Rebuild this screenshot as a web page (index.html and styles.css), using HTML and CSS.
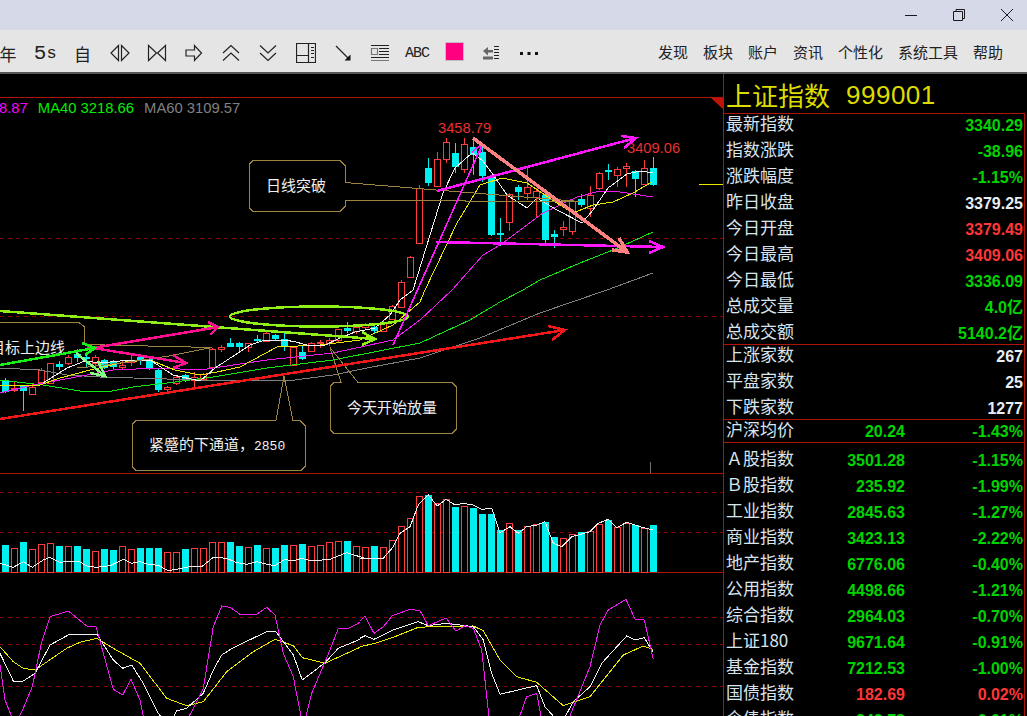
FILE: index.html
```html
<!DOCTYPE html>
<html lang="zh-CN">
  <head>
    <meta charset="UTF-8" />
    <title>上证指数 999001</title>
    <link rel="stylesheet" href="styles.css">
  </head>
  <body>
    <header class="titlebar">
      <svg class="win-btn" width="14" height="14" viewBox="0 0 14 14"><path d="M1 7.500h12" /></svg>
      <svg class="win-btn" width="14" height="14" viewBox="0 0 14 14"><path d="M1.500 3.500h9v9h-9zM4 3.500v-2h8.500v9h-2" /></svg>
      <svg class="win-btn" width="14" height="14" viewBox="0 0 14 14"><path d="M1 1l12 12M13 1l-12 12" /></svg>
    </header>

    <nav class="toolbar">
      <div class="tools">
        <span class="tool tool-text tool-cjk">年</span>
        <span class="tool tool-text tool-5s"><b>5</b>s</span>
        <span class="tool tool-text tool-cjk">自</span>
        <span class="tool"><svg width="20" height="20" viewBox="0 0 20 20"><path d="M8.500 2.500l-7.500 7.500 7.500 7.500zM11.500 2.500l7.500 7.500-7.500 7.500z" /></svg></span>
        <span class="tool"><svg width="20" height="20" viewBox="0 0 20 20"><path d="M1.500 2.500l8 7.500-8 7.500zM18.500 2.500l-8 7.500 8 7.500z" /></svg></span>
        <span class="tool"><svg width="20" height="20" viewBox="0 0 20 20"><path d="M2 7h8.500v-4.500l7 7.500-7 7.500v-4.500h-8.500z" /></svg></span>
        <span class="tool"><svg width="20" height="20" viewBox="0 0 20 20"><path d="M2 10l8-7.500 8 7.500M2 17.500l8-7.500 8 7.500" /></svg></span>
        <span class="tool"><svg width="20" height="20" viewBox="0 0 20 20"><path d="M2 2.500l8 7.500 8-7.500M2 10l8 7.500 8-7.500" /></svg></span>
        <span class="tool"><svg width="20" height="20" viewBox="0 0 20 20"><path d="M.5.5h19v19h-19zM.5 12.500h12M12.500 .5v19" /><path d="M15 4.500h3M15 7.500h3M15 10.500h3M15 14.500h3" /></svg></span>
        <span class="tool"><svg width="20" height="20" viewBox="0 0 20 20"><path d="M3 3l13 13" /><path class="solid" d="M17.500 17.500h-6l6-6z" /></svg></span>
        <span class="tool"><svg width="20" height="20" viewBox="0 0 20 20"><path d="M1 2.500h18M9 5.500h10M9 8.500h10M9 11.500h10M1 14.500h18" /><path class="pale" d="M1.500 5.500h6v6h-6zM1 17.500h18" /></svg></span>
        <span class="tool tool-text tool-abc">ABC</span>
        <span class="tool"><span class="swatch"></span></span>
        <span class="tool"><svg width="20" height="20" viewBox="0 0 20 20"><path class="pale-solid" d="M2 8l5-4v3h5v2.500h-5v3zM2 13.500h10v3h-10z" /><path d="M13 3.500h5M13 6.500h5M13 9.500h5M13 12.500h5M13 15.500h5" /></svg></span>
        <span class="tool"><svg width="20" height="20" viewBox="0 0 20 20"><path class="solid" d="M1 9h3v3h-3zM8.500 9h3v3h-3zM16 9h3v3h-3z" /></svg></span>
      </div>
      <div class="menus">
        <a>发现</a>
        <a>板块</a>
        <a>账户</a>
        <a>资讯</a>
        <a>个性化</a>
        <a>系统工具</a>
        <a>帮助</a>
      </div>
    </nav>

    <main class="terminal">
      <section class="chart">
        <div class="legend">
          <span class="ma20">8.87</span>
          <span class="ma40">MA40 3218.66</span>
          <span class="ma60">MA60 3109.57</span>
        </div>
        <svg id="plot" class="plot" width="723" height="642" viewBox="0 74 723 642">
          <!-- grid -->
          <path class="frame" d="M0 97.500h723M0 473.500h723M0 572.500h723" />
          <path class="frame-fill" d="M711 98h12v11z" />
          <path class="dash" d="M0 238.500h723M0 316.500h723M0 492.500h723M0 532.500h723M0 617.500h723M0 644.500h723M0 686.500h723" />
          <path class="tick" d="M650.500 462v11" />
          <path class="ma-yellow" d="M699 184.500h24" />

          <!-- candles and indicator lines from chart.js -->
          <g id="series"></g>

          <!-- hand drawn callouts -->
          <path class="callout" d="M253 160.500h87l5 5v17l85 7 150 12-235-1v6l-5 5h-87l-4-4v-43z" />
          <path class="callout" d="M0 322.500h79l5 4v18l128 3-40 8-40 6-48 6h-7" />
          <path class="callout" d="M136 420.500h140l8-44 9 44h7l5 5v41l-4 4h-165l-4-4v-42z" />
          <path class="callout" d="M334 382.500h7l-11-35 28 35h94l4 4v43l-4 4h-118l-4-4v-43z" />
          <text class="note" x="266" y="191">日线突破</text>
          <text class="note" x="-10" y="353">目标上边线</text>
          <text class="note" x="149" y="450">紧蹙的下通道，<tspan class="note-num">2850</tspan></text>
          <text class="note" x="347" y="413">今天开始放量</text>

          <text class="peak" x="438" y="133">3458.79</text>
          <text class="peak" x="627" y="153">3409.06</text>

          <!-- trend lines -->
          <path class="trend lime" d="M0 311l375 28M362 332l13 7-13 6" />
          <ellipse class="trend lime" cx="319" cy="316.500" rx="89" ry="10" />
          <path class="trend red" d="M0 419l565-89M548 326l17 4-13 10" />
          <path class="trend pink" d="M87 349l131-22M208 322l10 5-8 8" />
          <path class="trend pink" d="M87 347l99 16M173 355l13 8-13 5" />
          <path class="trend green" d="M0 365l95-17M82 343l13 5-10 7" />
          <path class="trend pale-green" d="M76 353l29 23M90 373l15 3-7-15" />
          <path class="trend magenta" d="M437 191l199-53M621 136l15 2-12 10" />
          <path class="trend magenta" d="M436 242l227 5M649 241l14 6-14 6" />
          <path class="trend magenta thin" d="M393 345l89-200M472 152l10-8-2 9" />
          <path class="trend salmon" d="M473 138l154 114M619 238l8 14-15-2" />
        </svg>
      </section>

      <aside class="quote">
        <h2 class="quote-title"><span>上证指数</span><span>999001</span></h2>

        <div class="block">
          <div class="row"><span>最新指数</span><b class="down">3340.29</b></div>
          <div class="row"><span>指数涨跌</span><b class="down">-38.96</b></div>
          <div class="row"><span>涨跌幅度</span><b class="down">-1.15%</b></div>
          <div class="row"><span>昨日收盘</span><b class="flat">3379.25</b></div>
          <div class="row"><span>今日开盘</span><b class="up">3379.49</b></div>
          <div class="row"><span>今日最高</span><b class="up">3409.06</b></div>
          <div class="row"><span>今日最低</span><b class="down">3336.09</b></div>
          <div class="row"><span>总成交量</span><b class="down">4.0亿</b></div>
          <div class="row"><span>总成交额</span><b class="down">5140.2亿</b></div>
        </div>

        <div class="block">
          <div class="row"><span>上涨家数</span><b class="flat">267</b></div>
          <div class="row"><span>平盘家数</span><b class="flat">25</b></div>
          <div class="row"><span>下跌家数</span><b class="flat">1277</b></div>
        </div>

        <div class="block">
          <div class="row row-3"><span>沪深均价</span><b class="down">20.24</b><b class="down">-1.43%</b></div>
        </div>

        <div class="block block-last">
          <div class="row row-3"><span>Ａ股指数</span><b class="down">3501.28</b><b class="down">-1.15%</b></div>
          <div class="row row-3"><span>Ｂ股指数</span><b class="down">235.92</b><b class="down">-1.99%</b></div>
          <div class="row row-3"><span>工业指数</span><b class="down">2845.63</b><b class="down">-1.27%</b></div>
          <div class="row row-3"><span>商业指数</span><b class="down">3423.13</b><b class="down">-2.22%</b></div>
          <div class="row row-3"><span>地产指数</span><b class="down">6776.06</b><b class="down">-0.40%</b></div>
          <div class="row row-3"><span>公用指数</span><b class="down">4498.66</b><b class="down">-1.21%</b></div>
          <div class="row row-3"><span>综合指数</span><b class="down">2964.03</b><b class="down">-0.70%</b></div>
          <div class="row row-3"><span>上证180</span><b class="down">9671.64</b><b class="down">-0.91%</b></div>
          <div class="row row-3"><span>基金指数</span><b class="down">7212.53</b><b class="down">-1.00%</b></div>
          <div class="row row-3"><span>国债指数</span><b class="up">182.69</b><b class="up">0.02%</b></div>
          <div class="row row-3"><span>企债指数</span><b class="down">243.78</b><b class="down">-0.01%</b></div>
        </div>
      </aside>
    </main>

    <script src="chart.js"></script>
  </body>
</html>
```

FILE: styles.css
```css
html,
body {
  margin: 0;
  padding: 0;
  height: 716px;
  overflow: hidden;
  background-color: #000;
}

body {
  font-family: "Liberation Sans", "Noto Sans CJK SC", sans-serif;
}

.titlebar {
  display: flex;
  justify-content: flex-end;
  align-items: center;
  gap: 34px;
  height: 30px;
  padding-right: 13px;
  box-sizing: border-box;
  background-color: #d6dae8;
}

.win-btn path {
  fill: none;
  stroke: #1a1a1a;
  stroke-width: 1;
}

.toolbar {
  display: flex;
  justify-content: space-between;
  align-items: center;
  height: 44px;
  box-sizing: border-box;
  background-color: #e5e5e5;
  border-bottom: 2px solid #555;
}

.tools {
  display: flex;
  margin-left: -10.600px;
  padding-top: 4px;
}

.tool {
  display: flex;
  justify-content: center;
  align-items: center;
  width: 37.200px;
  height: 24px;
  color: #222;
}

.tool svg path {
  fill: none;
  stroke: #222;
  stroke-width: 1.200;
}

.tool svg path.solid {
  fill: #111;
  stroke: none;
}

.tool svg path.pale {
  stroke: #777;
}

.tool svg path.pale-solid {
  fill: #666;
  stroke: none;
}

.tool-text {
  font-size: 17px;
}

.tool-cjk {
  font-family: "Noto Sans CJK SC", sans-serif;
  font-weight: 400;
}

.tool-5s {
  font-family: "Liberation Mono", monospace;
  font-size: 17px;
}

.tool-5s b {
  font-size: 21px;
  font-weight: 400;
}

.tool-abc {
  font-family: "Liberation Mono", monospace;
  font-size: 15px;
  letter-spacing: -1px;
}

.swatch {
  width: 19px;
  height: 19px;
  margin-bottom: 3px;
  background-color: #ff0080;
  border: 1px solid #c0c0c0;
  box-sizing: border-box;
}

.menus {
  display: flex;
  gap: 15px;
  padding-right: 24px;
  font-family: "Noto Sans CJK SC", sans-serif;
  font-size: 15px;
  color: #222;
}

.terminal {
  display: flex;
  height: 642px;
  overflow: hidden;
}

.chart {
  position: relative;
  flex: 0 0 723px;
  height: 642px;
}

.plot {
  display: block;
}

.legend {
  position: absolute;
  top: 26px;
  left: -1px;
  display: flex;
  gap: 10px;
  font-size: 14.800px;
  line-height: 16px;
}

.ma20 {
  color: #ff00ff;
}

.ma40 {
  color: #00f000;
}

.ma60 {
  color: #808080;
}

/* chart svg */
.frame {
  fill: none;
  stroke: #b01408;
  shape-rendering: crispEdges;
}

.frame-fill {
  fill: #c01408;
}

.dash {
  fill: none;
  stroke: #8c0000;
  stroke-dasharray: 4 4;
  shape-rendering: crispEdges;
}

.tick {
  fill: none;
  stroke: #707070;
  shape-rendering: crispEdges;
}

.callout {
  fill: none;
  stroke: #9c8440;
  shape-rendering: crispEdges;
}

.note {
  font-family: "Noto Sans CJK SC", sans-serif;
  font-size: 15px;
  fill: #f0f0f0;
}

.note-num {
  font-family: "Liberation Mono", monospace;
  font-size: 13px;
}

.peak {
  font-family: "Liberation Sans", sans-serif;
  font-size: 14.700px;
  fill: #e83030;
}

.trend {
  fill: none;
  stroke-width: 2.500;
  stroke-linejoin: miter;
  shape-rendering: crispEdges;
}

.lime {
  stroke: #90f018;
}

.red {
  stroke: #f01818;
}

.pink {
  stroke: #ff1090;
}

.green {
  stroke: #18f018;
}

.pale-green {
  stroke: #80ff80;
}

.magenta {
  stroke: #ff18ff;
}

.thin {
  stroke-width: 1.600;
}

.salmon {
  stroke: #ff8080;
  stroke-width: 3.500;
}

.ma-white,
.ma-yellow,
.ma-magenta,
.ma-green,
.ma-gray {
  fill: none;
  stroke-width: 1;
  shape-rendering: crispEdges;
}

.ma-white {
  stroke: #f0f0f0;
}

.ma-yellow {
  stroke: #e8e800;
}

.ma-magenta {
  stroke: #f018f0;
}

.ma-green {
  stroke: #10e810;
}

.ma-gray {
  stroke: #808080;
}

.wick-red,
.wick-cyan {
  fill: none;
  shape-rendering: crispEdges;
}

.wick-red,
.bar-red {
  stroke: #ff3c3c;
}

.wick-cyan {
  stroke: #00f0f0;
}

.bar-red {
  fill: #000;
  shape-rendering: crispEdges;
}

.bar-cyan {
  fill: #00f0f0;
  shape-rendering: crispEdges;
}

/* right hand quote panel */
.quote {
  flex: 1;
  height: 642px;
  overflow: hidden;
  border-left: 1px solid #b01408;
  box-sizing: border-box;
  padding-right: 2px;
  font-family: "Noto Sans CJK SC", sans-serif;
}

.quote-title {
  display: flex;
  gap: 16px;
  align-items: center;
  height: 39px;
  margin: 0;
  padding-left: 2px;
  padding-top: 3px;
  box-sizing: border-box;
  font-size: 26px;
  line-height: 36px;
  font-weight: 400;
  color: #dcdc00;
}

.quote-title span:last-child {
  font-family: "Liberation Sans", sans-serif;
  letter-spacing: 0.500px;
}

.block {
  display: flex;
  flex-direction: column;
  gap: 4px;
  padding-bottom: 2px;
  border-top: 1px solid #b01408;
  border-right: 1px solid #b01408;
}

.block .row:first-child {
  margin-top: -2px;
}

.block-last {
  padding-top: 6px;
}

.row {
  display: grid;
  grid-template-columns: 80px 1fr;
  height: 22px;
  padding: 0 1px 0 2px;
  align-items: center;
  font-size: 17px;
  line-height: 22px;
  color: #d8e4ee;
}

.row-3 {
  grid-template-columns: 80px 99px 1fr;
}

.row span {
  padding-bottom: 5px;
}

.row b {
  justify-self: end;
  font-family: "Liberation Sans", "Noto Sans CJK SC", sans-serif;
  font-size: 16px;
  font-weight: 700;
}

.down {
  color: #00d400;
}

.up {
  color: #ff3636;
}

.flat {
  color: #e8eef4;
}
```

FILE: chart.js
```js
const NS = "http://www.w3.org/2000/svg";
const series = document.getElementById("series");

function add(tag, attrs) {
  const el = document.createElementNS(NS, tag);
  Object.keys(attrs).forEach((key) => el.setAttribute(key, attrs[key]));
  series.appendChild(el);
}

// slot, colour, wick top, body top, body bottom, wick bottom
const candles = [
  [0, "c", 378, 380, 392, 393], [1, "r", 382, 388, 390, 392], [2, "c", 385, 386, 391, 411],
  [3, "r", 383, 387, 394, 395], [4, "r", 368, 370, 382, 384], [5, "r", 363, 363, 383, 384],
  [6, "c", 361, 364, 367, 370], [7, "r", 355, 357, 363, 365], [8, "c", 349, 354, 358, 362],
  [9, "c", 355, 357, 359, 367], [10, "r", 355, 357, 363, 366], [11, "c", 359, 360, 368, 369],
  [12, "c", 360, 362, 367, 369], [13, "r", 360, 365, 367, 370], [14, "r", 355, 360, 362, 366],
  [15, "c", 355, 357, 361, 365], [16, "c", 358, 359, 368, 370], [17, "c", 368, 370, 390, 392],
  [18, "r", 386, 387, 389, 392], [19, "r", 376, 377, 383, 385], [20, "c", 374, 375, 381, 382],
  [21, "r", 372, 377, 380, 387], [22, "r", 373, 374, 379, 380], [23, "r", 348, 349, 367, 368],
  [24, "r", 345, 347, 349, 352], [25, "c", 338, 343, 347, 347], [26, "c", 342, 343, 347, 352],
  [27, "r", 343, 343, 347, 352], [28, "c", 335, 339, 341, 342], [29, "r", 332, 333, 341, 342],
  [30, "c", 334, 335, 339, 340], [31, "c", 333, 339, 347, 351], [32, "r", 346, 347, 365, 366],
  [33, "c", 345, 352, 359, 360], [34, "r", 342, 343, 351, 352], [35, "r", 340, 342, 343, 348],
  [36, "r", 338, 340, 343, 346], [37, "r", 329, 329, 340, 342], [38, "c", 322, 328, 331, 333],
  [39, "r", 325, 327, 331, 334], [40, "r", 323, 325, 327, 330], [41, "c", 324, 327, 331, 333],
  [42, "r", 320, 323, 331, 332], [43, "r", 305, 306, 319, 320], [44, "r", 280, 282, 307, 308],
  [45, "r", 256, 257, 277, 278], [46, "r", 185, 188, 243, 244], [47, "c", 158, 168, 183, 186],
  [48, "r", 152, 159, 186, 187], [49, "r", 138, 142, 159, 163], [50, "c", 143, 153, 167, 173],
  [51, "r", 138, 144, 169, 173], [52, "c", 140, 147, 155, 175], [53, "c", 143, 152, 176, 182],
  [54, "c", 176, 177, 235, 236], [55, "c", 218, 233, 235, 246], [56, "r", 193, 194, 222, 231],
  [57, "c", 185, 187, 192, 200], [58, "r", 168, 187, 193, 200], [59, "r", 188, 191, 197, 217],
  [60, "c", 194, 195, 240, 243], [61, "c", 230, 234, 237, 248], [62, "r", 221, 227, 229, 236],
  [63, "r", 200, 201, 231, 235], [64, "c", 194, 199, 205, 207], [65, "r", 186, 195, 208, 217],
  [66, "r", 172, 173, 188, 190], [67, "c", 164, 170, 172, 180], [68, "r", 167, 169, 175, 187],
  [69, "r", 163, 166, 168, 187], [70, "c", 170, 171, 179, 197], [71, "r", 160, 168, 184, 185],
  [72, "c", 157, 168, 185, 186],
];

// volume bars: colour and top, in the same slots as the candles
const volumes = [
  ["c", 545], ["r", 548], ["c", 542], ["r", 549], ["r", 544], ["r", 543], ["c", 546], ["r", 546],
  ["c", 546], ["c", 549], ["r", 551], ["c", 549], ["c", 550], ["r", 546], ["r", 549], ["c", 548],
  ["c", 548], ["c", 548], ["r", 552], ["r", 552], ["c", 549], ["r", 548], ["r", 548], ["r", 542],
  ["r", 542], ["c", 542], ["c", 546], ["r", 547], ["c", 545], ["r", 548], ["c", 548], ["c", 545],
  ["r", 545], ["c", 544], ["r", 546], ["r", 545], ["r", 542], ["r", 541], ["c", 541], ["r", 546],
  ["r", 547], ["c", 546], ["r", 547], ["r", 540], ["r", 526], ["r", 518], ["r", 496], ["c", 495],
  ["r", 503], ["r", 499], ["c", 507], ["r", 506], ["c", 508], ["c", 514], ["c", 514], ["c", 530],
  ["r", 523], ["c", 530], ["r", 526], ["r", 524], ["c", 522], ["c", 537], ["r", 538], ["r", 534],
  ["c", 532], ["r", 531], ["r", 524], ["c", 520], ["r", 527], ["r", 523], ["c", 525], ["r", 528],
  ["c", 525],
];

candles.forEach(([slot, colour, wickTop, top, bottom, wickBottom]) => {
  const x = 2 + slot * 9;
  const wick = "M" + (x + 3.5) + " " + wickTop + "V" + wickBottom;
  add("path", { d: wick, class: colour === "r" ? "wick-red" : "wick-cyan" });
  if (colour === "r") {
    add("rect", { x: x + 0.5, y: top + 0.5, width: 6, height: bottom - top, class: "bar-red" });
  } else {
    add("rect", { x: x, y: top, width: 7, height: Math.max(bottom - top, 1), class: "bar-cyan" });
  }
});

volumes.forEach(([colour, top], slot) => {
  const x = 2 + slot * 9;
  if (colour === "r") {
    add("rect", { x: x + 0.5, y: top + 0.5, width: 6, height: 572 - top, class: "bar-red" });
  } else {
    add("rect", { x: x, y: top, width: 7, height: 572 - top, class: "bar-cyan" });
  }
});

function line(cls, pts) {
  add("polyline", { points: pts.map((p) => p.join(",")).join(" "), class: cls });
}

// the lower indicator lines were read at 3x, so they are scaled down here
function line3(cls, ox, oy, pts) {
  line(cls, pts.map(([x, y]) => [(ox + x / 3).toFixed(1), (oy + y / 3).toFixed(1)]));
}

// moving averages
line("ma-gray", [[0, 368], [40, 370], [67, 375], [100, 377], [200, 380], [287, 381], [333, 375], [367, 368], [420, 358], [480, 338], [540, 313], [607, 290], [653, 273]]);
line("ma-green", [[0, 380], [43, 385], [80, 391], [107, 392], [133, 387], [167, 383], [213, 377], [267, 368], [333, 360], [420, 343], [470, 320], [500, 302], [523, 290], [540, 280], [580, 263], [613, 250], [653, 232]]);
line("ma-magenta", [[0, 393], [33, 385], [87, 375], [113, 370], [160, 368], [200, 370], [267, 360], [333, 353], [393, 340], [420, 320], [452, 290], [483, 255], [500, 245], [543, 213], [577, 197], [600, 191], [620, 192], [653, 197]]);
line("ma-yellow", [[0, 385], [40, 385], [60, 378], [90, 370], [125, 362], [150, 360], [175, 370], [200, 375], [217, 372], [240, 367], [277, 347], [320, 345], [360, 340], [393, 325], [420, 302], [425, 290], [457, 223], [480, 185], [502, 178], [527, 183], [557, 203], [573, 213], [593, 205], [613, 202], [633, 193], [652, 182]]);
line("ma-white", [[43, 383], [67, 368], [85, 361], [100, 363], [130, 360], [150, 360], [173, 375], [200, 381], [215, 368], [235, 355], [250, 345], [265, 340], [285, 340], [296, 342], [310, 346], [325, 345], [340, 338], [355, 332], [375, 328], [390, 315], [400, 300], [413, 290], [443, 193], [455, 168], [472, 153], [482, 160], [492, 173], [507, 195], [527, 208], [537, 198], [557, 210], [582, 223], [593, 210], [608, 188], [627, 174], [640, 171], [653, 173]]);

// volume average
line3("ma-white", 0, 480, [[0, 250], [40, 262], [70, 245], [97, 262], [130, 240], [150, 232], [180, 248], [205, 243], [235, 243], [260, 258], [290, 262], [330, 257], [370, 238], [395, 250], [420, 245], [445, 253], [475, 256], [505, 272], [545, 265], [580, 258], [605, 260], [640, 232], [680, 235], [710, 248], [740, 253], [770, 245], [800, 253], [825, 257], [855, 238], [880, 243], [905, 235], [935, 243], [990, 238], [1040, 218], [1095, 235]]);
line3("ma-white", 360, 480, [[0, 235], [70, 235], [100, 200], [120, 160], [150, 140], [175, 75], [205, 45], [232, 78], [258, 58], [285, 75], [310, 70], [340, 75], [365, 88], [395, 85], [420, 158], [450, 140], [475, 160], [500, 140], [530, 135], [555, 125], [580, 190], [605, 200], [635, 170], [690, 155], [715, 130], [745, 118], [770, 143], [800, 127], [840, 140], [878, 150]]);

// KDJ
line3("ma-yellow", 0, 480, [[0, 500], [40, 545], [70, 565], [105, 570], [200, 505], [240, 487], [290, 475], [340, 505], [420, 550], [500, 655], [560, 677], [610, 665], [680, 575], [760, 515], [825, 478], [880, 497], [907, 533], [975, 550], [1080, 502]]);
line3("ma-yellow", 360, 480, [[0, 500], [45, 490], [100, 472], [175, 442], [215, 440], [340, 438], [370, 452], [420, 540], [470, 590], [530, 607], [610, 677], [690, 650], [790, 525], [850, 498], [878, 508]]);
line3("ma-white", 0, 480, [[0, 520], [40, 603], [70, 603], [105, 580], [150, 495], [205, 465], [235, 462], [290, 462], [340, 540], [368, 565], [395, 555], [430, 610], [475, 700], [490, 720], [515, 720], [530, 692], [560, 685], [610, 640], [640, 570], [665, 525], [700, 503], [800, 455], [828, 455], [880, 525], [907, 600], [975, 548], [1015, 505], [1080, 478]]);
line3("ma-white", 360, 480, [[0, 475], [15, 467], [42, 478], [100, 450], [175, 425], [205, 437], [258, 430], [340, 440], [370, 480], [395, 580], [420, 643], [495, 625], [530, 617], [555, 680], [590, 720], [610, 720], [640, 665], [690, 620], [725, 550], [800, 468], [825, 480], [853, 473], [878, 515]]);
line3("ma-magenta", 0, 480, [[0, 555], [15, 660], [37, 715], [55, 715], [70, 685], [97, 620], [125, 485], [150, 410], [205, 393], [260, 438], [288, 440], [340, 628], [368, 645], [393, 598], [420, 660], [432, 720], [562, 720], [610, 625], [640, 440], [665, 378], [690, 382], [720, 403], [770, 403], [800, 382], [825, 405], [850, 520], [880, 590], [905, 720], [915, 720], [935, 640], [990, 510], [1015, 445], [1045, 445], [1080, 427]]);
line3("ma-magenta", 360, 480, [[0, 422], [15, 408], [42, 460], [70, 440], [97, 407], [150, 388], [180, 392], [205, 437], [258, 414], [288, 453], [315, 437], [340, 445], [365, 510], [388, 720], [475, 720], [500, 650], [530, 640], [545, 720], [625, 720], [690, 560], [720, 435], [745, 390], [798, 358], [825, 417], [853, 420], [880, 538]]);
```
